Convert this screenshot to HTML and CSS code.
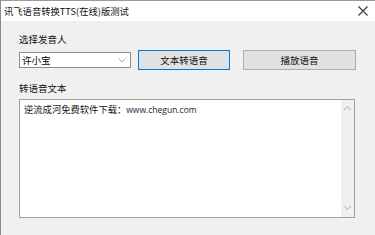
FILE: index.html
```html
<!DOCTYPE html>
<html>
<head>
<meta charset="utf-8">
<link rel="stylesheet" href="styles.css">
</head>
<body>
<div class="window">
  <div class="titlebar">
    <span class="title">讯飞语音转换TTS(在线)版测试</span>
    <svg class="close" width="10" height="10" viewBox="0 0 10 10"><path d="M0.5 0.5 L9.5 9.5 M9.5 0.5 L0.5 9.5" stroke="#333" stroke-width="1.1" fill="none"/></svg>
  </div>
  <div class="content">
    <div class="label first">选择发音人</div>
    <div class="row">
      <div class="combo">
        <span class="combo-text">许小宝</span>
        <svg class="chev" width="8" height="5" viewBox="0 0 8 5"><path d="M0.5 0.5 L4 4 L7.5 0.5" stroke="#a8a8a8" stroke-width="1" fill="none"/></svg>
      </div>
      <div class="btn focus">文本转语音</div>
      <div class="btn play">播放语音</div>
    </div>
    <div class="label second">转语音文本</div>
    <div class="textbox">
      <div class="text">逆流成河免费软件下载：<span class="url">www.chegun.com</span></div>
      <div class="scroll">
        <svg width="9" height="6" viewBox="0 0 9 6"><path d="M1 5 L4.5 1.5 L8 5" stroke="#c4c4c4" stroke-width="1.2" fill="none"/></svg>
        <svg width="9" height="6" viewBox="0 0 9 6"><path d="M1 1 L4.5 4.5 L8 1" stroke="#c4c4c4" stroke-width="1.2" fill="none"/></svg>
      </div>
    </div>
  </div>
</div>
</body>
</html>
```
FILE: styles.css
```css
html, body {
  margin: 0;
  padding: 0;
}
body {
  width: 375px;
  height: 235px;
  overflow: hidden;
  background: #f0f0f0;
  font-family: "Noto Sans CJK SC", "Noto Sans", sans-serif;
  font-size: 9.5px;
  color: #000;
}
.window {
  height: 235px;
  box-sizing: border-box;
  border-left: 1px solid #8a8a8a;
  border-top: 1px solid #9a9a9a;
  background: #f0f0f0;
}
.titlebar {
  height: 20px;
  background: #fff;
  display: flex;
  align-items: center;
  justify-content: space-between;
  padding: 0 7px 0 3px;
}
.title {
  font-size: 9.3px;
  line-height: 14px;
  color: #111;
}
.content {
  padding-left: 18px;
  padding-top: 10px;
}
.label {
  font-size: 9.5px;
  line-height: 16px;
  height: 16px;
  color: #111;
}
.second {
  margin-top: 10px;
}
.row {
  display: flex;
  align-items: center;
  margin-top: 3px;
  height: 20px;
}
.combo {
  width: 112px;
  height: 16px;
  box-sizing: border-box;
  border: 1px solid #8c8c8c;
  background: #fff;
  display: flex;
  align-items: center;
  justify-content: space-between;
  padding: 0 4px 0 2px;
}
.combo-text {
  font-size: 9.5px;
  line-height: 14px;
}
.btn {
  height: 20px;
  box-sizing: border-box;
  background: #e1e1e1;
  border: 1px solid #adadad;
  display: flex;
  align-items: center;
  justify-content: center;
  font-size: 9.5px;
  color: #111;
}
.btn.focus {
  width: 92px;
  margin-left: 7px;
  border-color: #0078d7;
}
.btn.play {
  width: 113px;
  margin-left: 13px;
}
.textbox {
  margin-top: 3px;
  width: 336px;
  height: 119px;
  box-sizing: border-box;
  border: 1px solid #a0a0a0;
  background: #fff;
  display: flex;
  justify-content: space-between;
}
.text {
  padding: 1px 0 0 4px;
  font-size: 9.3px;
  line-height: 16px;
  color: #111;
}
.url {
  font-family: "Open Sans", "Liberation Sans", sans-serif;
  font-size: 8.5px;
  color: #1a1a3a;
}
.scroll {
  width: 13px;
  background: #f0f0f0;
  display: flex;
  flex-direction: column;
  justify-content: space-between;
  align-items: center;
  padding: 5px 0 6px;
}
```
